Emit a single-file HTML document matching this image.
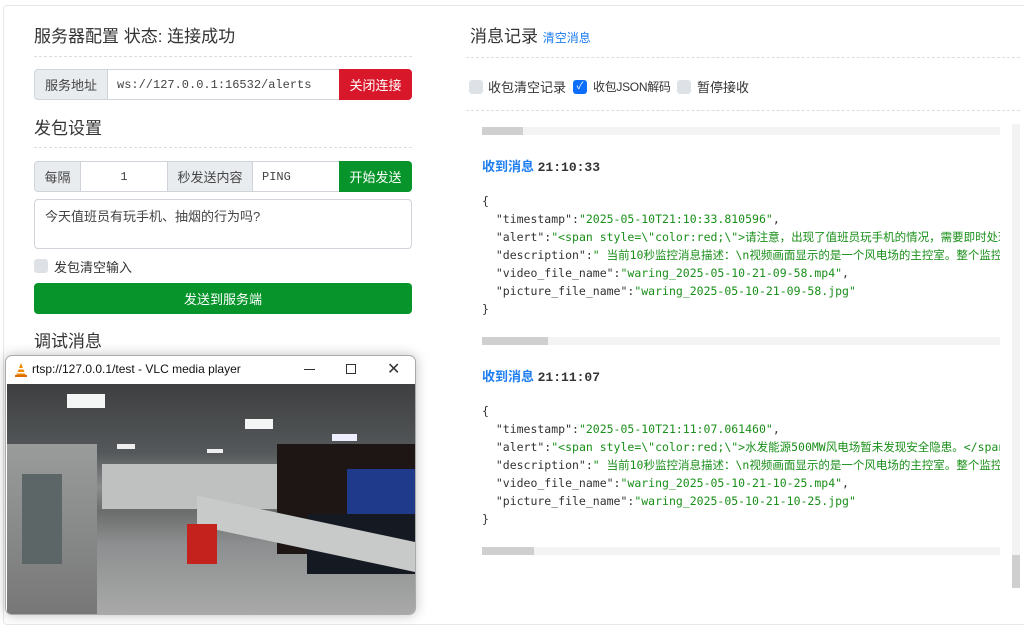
<!DOCTYPE html>
<html><head><meta charset="utf-8"><style>
*{box-sizing:border-box;margin:0;padding:0}
body{width:1024px;height:616px;overflow:hidden;background:#fff;font-family:"Liberation Sans","Noto Sans CJK SC",sans-serif;color:#333;position:relative}
.a{position:absolute}
.card{left:3px;top:5px;width:1030px;height:620px;border:1px solid #e8e8e8;border-radius:4px;background:#fff}
.h{font-size:17px;color:#333}
.dot{border-top:1px dashed #ddd;height:0}
.lab{background:#e9ecef;border:1px solid #ced4da;font-size:13px;color:#444;display:flex;align-items:center;justify-content:center}
.inp{background:#fff;border:1px solid #ced4da;font-size:13px;color:#444;display:flex;align-items:center}
.btn{color:#fff;font-size:13px;display:flex;align-items:center;justify-content:center;border-radius:0 4px 4px 0}
.cb{width:14px;height:14px;background:#dee2e6;border-radius:3px}
.mono{font-family:"Liberation Mono","Noto Sans CJK SC",monospace;font-size:12px}
.j{font-family:"DejaVu Sans Mono","Noto Sans CJK SC",monospace;font-size:11.5px;white-space:pre;color:#333;line-height:18px;width:518px;overflow:hidden}
.g{color:#1a8f1a}
.mh{color:#1e7ef0;font-weight:bold;font-size:13px}
.mh b{color:#333;font-family:"Liberation Mono",monospace}
.tr{height:8px;background:#f3f3f3}
.th{height:8px;background:#cfcfcf}
.cl{font-size:13px;top:77px}
</style></head><body>
<div class="a card"></div>
<div class="a h" style="left:34px;top:22px">服务器配置 状态: 连接成功</div>
<div class="a dot" style="left:34px;top:56px;width:378px"></div>
<div class="a lab" style="left:34px;top:69px;width:74px;height:31px;border-radius:4px 0 0 4px">服务地址</div>
<div class="a inp mono" style="left:107px;top:69px;width:233px;height:31px;padding-left:9px">ws://127.0.0.1:16532/alerts</div>
<div class="a btn" style="left:339px;top:69px;width:73px;height:31px;background:#d9172a">关闭连接</div>
<div class="a h" style="left:34px;top:114px">发包设置</div>
<div class="a dot" style="left:34px;top:147px;width:378px"></div>
<div class="a lab" style="left:34px;top:161px;width:47px;height:31px;border-radius:4px 0 0 4px">每隔</div>
<div class="a inp mono" style="left:80px;top:161px;width:88px;height:31px;justify-content:center">1</div>
<div class="a lab" style="left:167px;top:161px;width:86px;height:31px">秒发送内容</div>
<div class="a inp mono" style="left:252px;top:161px;width:88px;height:31px;padding-left:9px">PING</div>
<div class="a btn" style="left:339px;top:161px;width:73px;height:31px;background:#07952b">开始发送</div>
<div class="a inp" style="left:34px;top:199px;width:378px;height:50px;border-radius:4px;align-items:flex-start;padding:6px 10px;font-size:13px">今天值班员有玩手机、抽烟的行为吗?</div>
<div class="a cb" style="left:34px;top:259px"></div>
<div class="a" style="left:54px;top:257px;font-size:13px">发包清空输入</div>
<div class="a btn" style="left:34px;top:283px;width:378px;height:31px;background:#07952b;border-radius:4px">发送到服务端</div>
<div class="a h" style="left:34px;top:327px">调试消息</div>

<div class="a h" style="left:470px;top:22px">消息记录 <span style="font-size:12px;color:#1e7ef0">清空消息</span></div>
<div class="a dot" style="left:466px;top:57px;width:554px"></div>
<div class="a cb" style="left:469px;top:80px"></div>
<div class="a cl" style="left:488px">收包清空记录</div>
<div class="a cb" style="left:573px;top:80px;background:#0d6efd;color:#fff;font-size:10px;text-align:center;line-height:14px">✓</div>
<div class="a cl" style="left:593px;font-size:12px;top:78px;letter-spacing:-0.3px">收包JSON解码</div>
<div class="a cb" style="left:677px;top:80px"></div>
<div class="a cl" style="left:697px">暂停接收</div>
<div class="a dot" style="left:466px;top:110px;width:554px"></div>

<div class="a tr" style="left:482px;top:127px;width:518px"></div><div class="a th" style="left:482px;top:127px;width:41px"></div>
<div class="a mh" style="left:482px;top:156px">收到消息 <b>21:10:33</b></div>
<div class="a j" style="left:482px;top:192px">{
  "timestamp":<span class="g">"2025-05-10T21:10:33.810596"</span>,
  "alert":<span class="g">"&lt;span style=\"color:red;\"&gt;请注意，出现了值班员玩手机的情况，需要即时处理或</span>
  "description":<span class="g">" 当前10秒监控消息描述：\n视频画面显示的是一个风电场的主控室。整个监控过</span>
  "video_file_name":<span class="g">"waring_2025-05-10-21-09-58.mp4"</span>,
  "picture_file_name":<span class="g">"waring_2025-05-10-21-09-58.jpg"</span>
}</div>
<div class="a tr" style="left:482px;top:337px;width:518px"></div><div class="a th" style="left:482px;top:337px;width:66px"></div>
<div class="a mh" style="left:482px;top:366px">收到消息 <b>21:11:07</b></div>
<div class="a j" style="left:482px;top:402px">{
  "timestamp":<span class="g">"2025-05-10T21:11:07.061460"</span>,
  "alert":<span class="g">"&lt;span style=\"color:red;\"&gt;水发能源500MW风电场暂未发现安全隐患。&lt;/span&gt;"</span>,
  "description":<span class="g">" 当前10秒监控消息描述：\n视频画面显示的是一个风电场的主控室。整个监控过</span>
  "video_file_name":<span class="g">"waring_2025-05-10-21-10-25.mp4"</span>,
  "picture_file_name":<span class="g">"waring_2025-05-10-21-10-25.jpg"</span>
}</div>
<div class="a tr" style="left:482px;top:547px;width:518px"></div><div class="a th" style="left:482px;top:547px;width:52px"></div>
<div class="a" style="left:1012px;top:124px;width:8px;height:464px;background:#f3f3f3"></div>
<div class="a" style="left:1012px;top:555px;width:8px;height:33px;background:#cfcfcf"></div>

<div class="a" style="left:5px;top:355px;width:411px;height:260px;border:1px solid #aaa;border-radius:7px;background:#fff;box-shadow:0 0 12px rgba(0,0,0,.25);overflow:hidden">
 <svg class="a" style="left:8px;top:7px" width="14" height="14" viewBox="0 0 14 14"><polygon points="7,0 12,13 2,13" fill="#f08a00"/><rect x="3.5" y="5" width="7" height="1.5" fill="#fff"/><rect x="2.7" y="9" width="8.6" height="1.5" fill="#fff"/><rect x="1" y="12" width="12" height="2" fill="#e06a00"/></svg>
 <div class="a" style="left:26px;top:6px;font-size:12px;color:#111">rtsp://127.0.0.1/test - VLC media player</div>
 <div class="a" style="left:298px;top:13px;width:11px;height:1px;background:#333"></div>
 <div class="a" style="left:340px;top:8px;width:10px;height:10px;border:1px solid #333"></div>
 <div class="a" style="left:381px;top:3px;font-size:16px;color:#333">✕</div>
 <div class="a" style="left:1px;top:28px;width:409px;height:230px;background:linear-gradient(#3d3f40 0%,#55585a 30%,#8a8c8c 45%,#6b6d6d 55%,#8d8f90 70%,#a8a9a8 100%);overflow:hidden">
  <div class="a" style="left:0;top:60px;width:90px;height:170px;background:linear-gradient(#9a9c9c,#777)"></div>
  <div class="a" style="left:95px;top:80px;width:175px;height:45px;background:#bfc1c0"></div>
  <div class="a" style="left:270px;top:60px;width:139px;height:110px;background:#1d1614"></div>
  <div class="a" style="left:340px;top:85px;width:69px;height:45px;background:#1f3a8a"></div>
  <div class="a" style="left:300px;top:130px;width:109px;height:60px;background:#151a22"></div>
  <div class="a" style="left:15px;top:90px;width:40px;height:90px;background:#5c6666"></div>
  <div class="a" style="left:190px;top:135px;width:220px;height:30px;background:#c8c9c9;transform:skewY(12deg)"></div>
  <div class="a" style="left:180px;top:140px;width:30px;height:40px;background:#c4221d"></div>
  <div class="a" style="left:60px;top:10px;width:38px;height:14px;background:#f4f6f6"></div>
  <div class="a" style="left:238px;top:35px;width:28px;height:10px;background:#f4f6f6"></div>
  <div class="a" style="left:325px;top:50px;width:25px;height:7px;background:#eef"></div>
  <div class="a" style="left:110px;top:60px;width:18px;height:5px;background:#eee"></div>
  <div class="a" style="left:200px;top:65px;width:16px;height:4px;background:#eee"></div>
 </div>
</div>
</body></html>
